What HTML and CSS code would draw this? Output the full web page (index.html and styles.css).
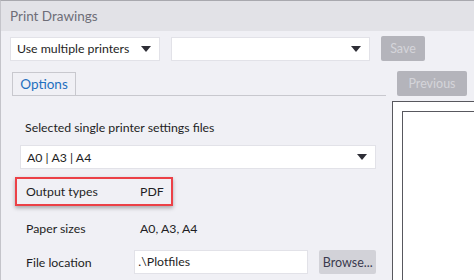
FILE: index.html
```html
<!DOCTYPE html>
<html lang="en">
<head>
    <meta charset="UTF-8">
    <meta name="viewport" content="width=device-width, initial-scale=1.0">
    <title>Print Drawings</title>
    <link rel="stylesheet" href="styles.css">
</head>
<body>

    <div class="titlebar">Print Drawings</div>

    <div class="toolbar">
        <div class="select select-mode">
            <span>Use multiple printers</span>
            <span class="arrow"></span>
        </div>
        <div class="select select-preset">
            <span></span>
            <span class="arrow"></span>
        </div>
        <button class="btn btn-disabled btn-save">Save</button>
    </div>

    <div class="main">
        <div class="left">
            <div class="tabs">
                <div class="tab">Options</div>
            </div>

            <div class="options">
                <div class="section-label">Selected single printer settings files</div>
                <div class="select select-files">
                    <span>A0 | A3 | A4</span>
                    <span class="arrow"></span>
                </div>

                <div class="row row-highlight">
                    <span class="key">Output types</span>
                    <span class="value">PDF</span>
                </div>
                <div class="row">
                    <span class="key">Paper sizes</span>
                    <span class="value">A0, A3, A4</span>
                </div>
                <div class="row row-file">
                    <span class="key">File location</span>
                    <div class="input">.\Plotfiles</div>
                    <button class="btn btn-browse">Browse...</button>
                </div>
            </div>
        </div>

        <div class="right">
            <button class="btn btn-disabled btn-previous">Previous</button>
            <div class="preview">
                <div class="sheet"></div>
            </div>
        </div>
    </div>

</body>
</html>
```

FILE: styles.css
```css
body {
    font-family: 'Lato', 'Noto Sans', sans-serif;
    font-size: 12.3px;
    color: #1e1e24;
    background-color: #f0f0f5;
    margin: 0;
    height: 280px;
    overflow: hidden;
    border-top: 1px solid #a8a8ae;
    border-left: 1px solid #c4c4ca;
    box-sizing: border-box;
}
.titlebar {
    height: 30px;
    line-height: 30px;
    background: #e2e2e7;
    color: #6e6e78;
    font-size: 13.5px;
    padding-left: 9px;
}
.toolbar {
    display: flex;
    align-items: center;
    gap: 11px;
    padding: 5px 0 0 9px;
}
.select {
    display: flex;
    align-items: center;
    justify-content: space-between;
    height: 24px;
    background: #fff;
    border: 1px solid #e2e2e8;
    box-sizing: border-box;
    padding: 0 8px 0 6px;
}
.select-mode {
    width: 150px;
}
.select-preset {
    width: 199px;
}
.arrow {
    width: 0;
    height: 0;
    border-left: 5px solid transparent;
    border-right: 5px solid transparent;
    border-top: 6px solid #2e2e36;
}
.btn {
    font-family: inherit;
    font-size: 12.5px;
    border: none;
    border-radius: 2px;
    height: 25px;
    padding: 0;
}
.btn-disabled {
    background: #b4b4bb;
    color: #d4d4da;
}
.btn-save {
    width: 44px;
}
.main {
    display: flex;
    gap: 6px;
    margin-top: 10px;
}
.left {
    width: 374px;
    margin-left: 11px;
}
.tabs {
    display: flex;
    height: 23px;
    margin-top: 1px;
    border-bottom: 1px solid #c8c8ce;
}
.tab {
    width: 64px;
    height: 23px;
    box-sizing: border-box;
    border: 1px solid #c8c8ce;
    border-bottom: none;
    color: #1f6fc0;
    font-size: 13.5px;
    text-align: center;
    line-height: 22px;
}
.options {
    padding: 0 10px 0 8px;
}
.section-label {
    margin: 23px 0 0 5px;
    height: 18px;
    line-height: 18px;
}
.select-files {
    width: 356px;
    margin-top: 8px;
}
.row {
    display: flex;
    align-items: center;
    height: 28px;
    padding-left: 6px;
}
.row-highlight {
    width: 158px;
    height: 29px;
    box-sizing: border-box;
    margin: 8px 0 8px -5px;
    padding-left: 9px;
    border: 2px solid #ec4147;
    box-shadow: 0 2px 4px rgba(0, 0, 0, 0.3);
}
.key {
    width: 114px;
}
.row-file {
    height: 24px;
    margin-top: 8px;
}
.input {
    width: 175px;
    height: 24px;
    box-sizing: border-box;
    background: #fff;
    border: 1px solid #e2e2e8;
    padding-left: 3px;
    line-height: 22px;
    margin-left: -5px;
}
.btn-browse {
    width: 57px;
    height: 24px;
    margin-left: 11px;
    background: #d2d2d8;
    color: #3a3a4e;
}
.right {
    display: flex;
    flex-direction: column;
}
.btn-previous {
    width: 70px;
    margin-left: 5px;
}
.preview {
    width: 100px;
    height: 200px;
    margin-top: 5px;
    background: #fff;
    border: 1px solid #58585e;
    padding: 9px 0 0 9px;
}
.sheet {
    height: 100%;
    border-left: 1px solid #58585e;
    border-top: 1px solid #58585e;
}
```
